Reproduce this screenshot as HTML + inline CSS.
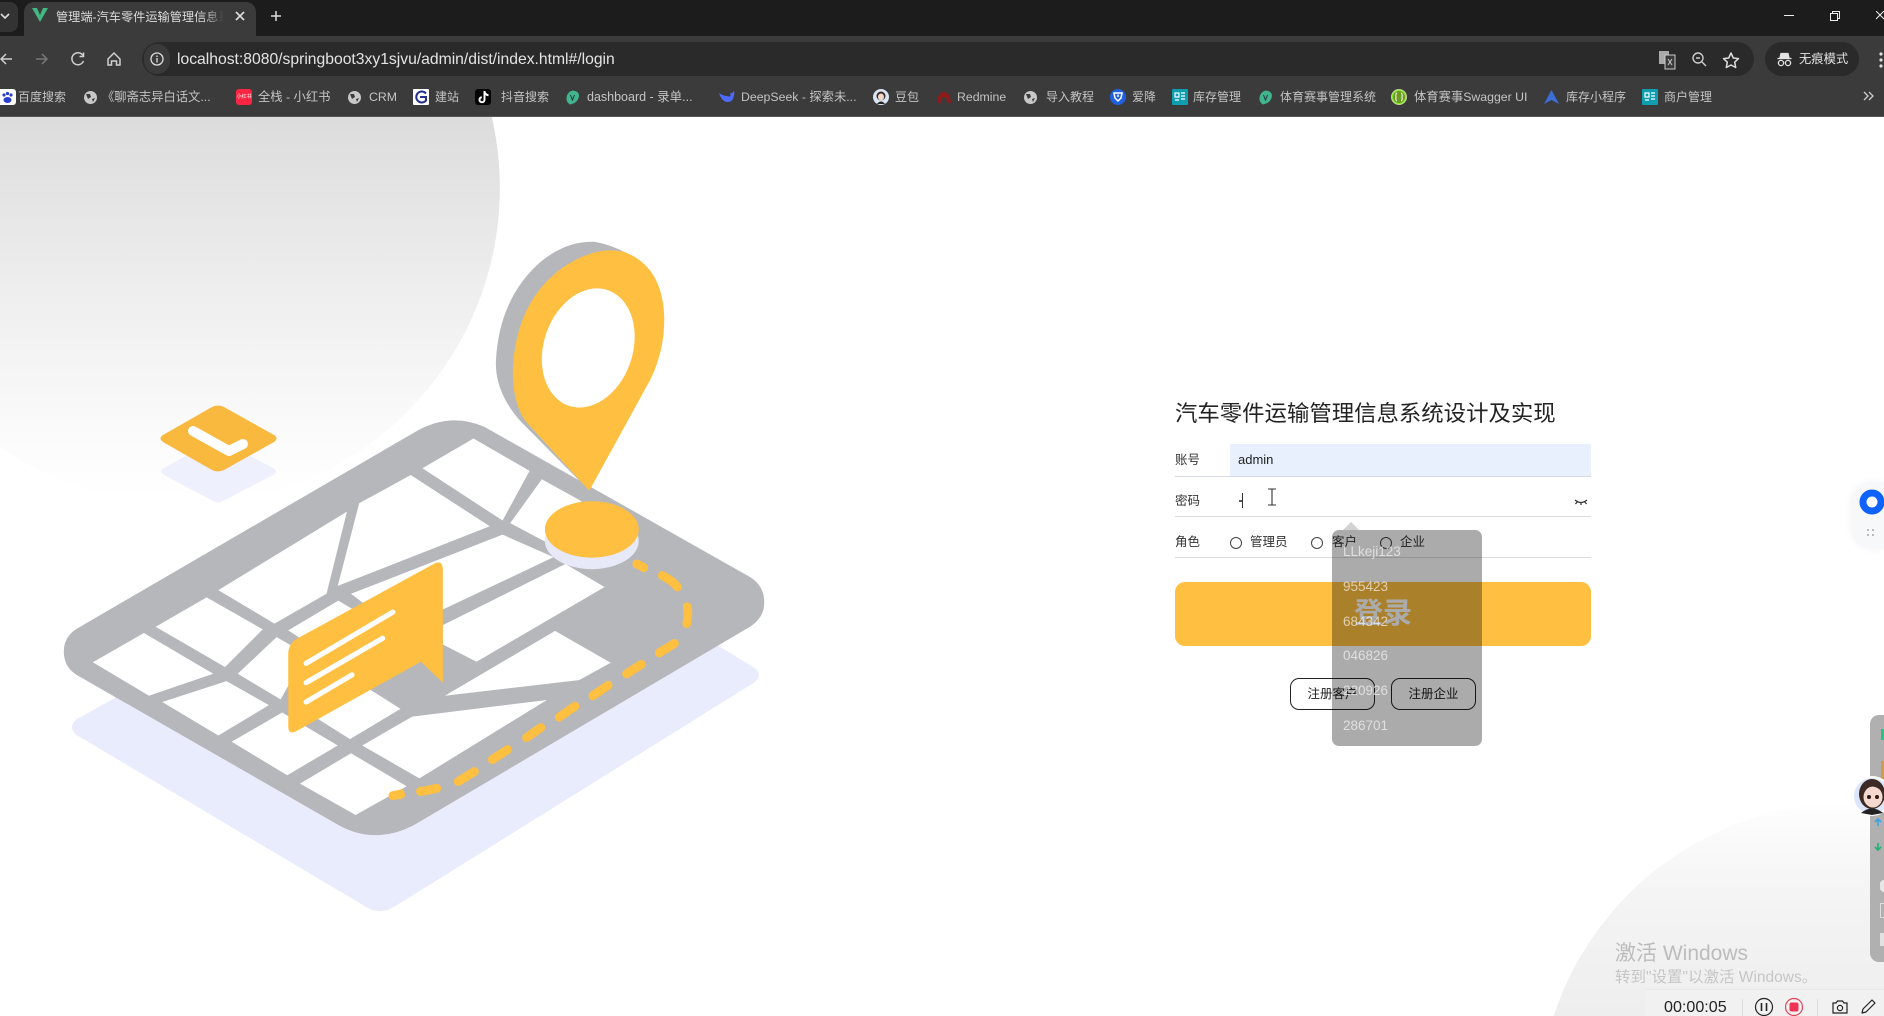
<!DOCTYPE html>
<html lang="zh-CN">
<head>
<meta charset="utf-8">
<title>管理端-汽车零件运输管理信息系统设计及实现</title>
<style>
html,body{margin:0;padding:0;background:#fff}
html{overflow:hidden;width:1884px;height:1016px}
body{width:1884px;height:1016px;position:relative;overflow:hidden;font-family:"Liberation Sans","Noto Sans CJK SC",sans-serif;color:#222}
.a{position:absolute;white-space:nowrap}
svg{position:absolute;overflow:hidden}
.bm{position:absolute;top:89px;height:17px;line-height:17px;font-size:12.3px;color:#c4c4c4;white-space:nowrap}
.z{font-size:12px}
.ic{position:absolute;top:89px;width:16px;height:16px;border-radius:3px}
.lbl{position:absolute;font-size:12.5px;line-height:16px;color:#333;white-space:nowrap}
.ln{position:absolute;left:1175px;width:416px;height:1px;background:#dcdcdc}
.rd{position:absolute;width:10px;height:10px;border:1px solid #444;border-radius:50%;background:transparent}
.it{position:absolute;left:1343px;font-size:13.5px;line-height:18px;color:rgba(255,255,255,.62);white-space:nowrap}
.rg{position:absolute;top:678px;width:83px;height:30px;border:1px solid #222;border-radius:9px;text-align:center;line-height:30px;font-size:12.5px;color:#222}
</style>
</head>
<body>
<!-- page background art -->
<svg width="1884" height="1016" style="left:0;top:0">
<defs>
<linearGradient id="g1" gradientUnits="userSpaceOnUse" x1="0" y1="117" x2="0" y2="495"><stop offset="0" stop-color="#dcdcdc"/><stop offset=".4" stop-color="#ececec"/><stop offset=".81" stop-color="#fafafa"/><stop offset="1" stop-color="#ffffff"/></linearGradient>
<linearGradient id="g2" gradientUnits="userSpaceOnUse" x1="0" y1="795" x2="0" y2="1016"><stop offset="0" stop-color="#ffffff"/><stop offset=".45" stop-color="#f4f4f4"/><stop offset="1" stop-color="#eeeeee"/></linearGradient>
</defs>
<path d="M0 0 H438.2 A317 317 0 0 1 0 446.8 Z" fill="url(#g1)"/>
<path d="M1553.6 1016 A310 310 0 0 1 1884 805.1 V1016 Z" fill="url(#g2)"/>
<!-- tag -->
<path d="M164 468 L213 441 Q218 438 223 441 L273 468 Q279 471 273 475 L223 501 Q218 504 213 501 L164 475 Q158 471 164 468Z" fill="#eef0fd"/>
<path d="M163 435 L212 407 Q218 404 224 407 L274 435 Q279 438 274 442 L224 470 Q218 473 212 470 L163 442 Q158 438 163 435Z" fill="#f9b93f"/>
<path d="M193 431 L229 451 L243 444" fill="none" stroke="#fff" stroke-width="10" stroke-linecap="round" stroke-linejoin="round"/>
<g transform="translate(0,110) scale(.5102,.523)">
<!-- lavender plate -->
<path d="M150 1165 L400 1030 L1300 960 L1478 1066 Q1497 1080 1478 1095 L772 1524 Q745 1540 718 1524 L150 1195 Q132 1180 150 1165Z" fill="#e9ecfc"/>
<!-- map -->
<path d="M150 992 L820 612 Q885 578 950 606 L1470 893 Q1498 910 1498 942 Q1498 970 1470 988 L810 1368 Q735 1405 665 1368 L150 1080 Q125 1065 125 1035 Q125 1008 150 992Z" fill="#b6b7bb"/>
<g fill="#fff">
<polygon points="928,628 1038,690 985,785 828,685"/>
<polygon points="805,698 960,796 662,910 704,752"/>
<polygon points="680,768 640,925 538,982 428,918"/>
<polygon points="405,932 515,993 441,1065 305,988"/>
<polygon points="282,1000 418,1078 292,1120 182,1056"/>
<polygon points="444,1092 527,1138 428,1196 318,1132"/>
<polygon points="542,1008 600,1040 550,1127 466,1078"/>
<polygon points="565,995 663,938 715,968 612,1025"/>
<polygon points="688,925 985,812 1085,855 868,955 800,960 715,945"/>
<polygon points="868,985 1108,868 1185,912 934,1055 868,1022"/>
<polygon points="1062,706 1140,748 1085,775 1068,825 1000,790"/>
<polygon points="1088,996 1197,1057 1135,1090 872,1120"/>
<polygon points="1072,1128 822,1278 710,1215 808,1160"/>
<polygon points="720,1105 785,1145 686,1203 600,1150"/>
<polygon points="454,1208 553,1152 662,1215 563,1272"/>
<polygon points="688,1230 797,1293 697,1348 588,1288"/>
</g>
<polygon points="760,1315 790,1298 795,1312 785,1318" fill="#ffbf40"/>
<!-- route dashes -->
<g fill="none" stroke="#ffbf40" stroke-width="17" stroke-linecap="round">
<path d="M1248 868 L1262 875"/>
<path d="M1298 890 Q1318 900 1328 912"/>
<path d="M1347 950 Q1350 965 1346 982"/>
<path d="M1322 1020 L1292 1038"/>
<path d="M1257 1060 L1228 1078"/>
<path d="M1192 1100 L1162 1120"/>
<path d="M1127 1140 L1096 1161"/>
<path d="M1060 1181 L1032 1200"/>
<path d="M995 1223 L965 1242"/>
<path d="M930 1265 L898 1284"/>
<path d="M856 1297 Q840 1301 824 1303"/>
<path d="M785 1308 L770 1311"/>
</g>
<!-- pin -->
<path d="M1155 728 L1020 595 Q970 540 972 480 Q978 360 1060 290 Q1110 250 1165 252 Q1200 258 1228 274 L1200 400 Z" fill="#b6b7bb"/>
<path d="M1155 728 L1030 595 Q1005 560 1005 500 Q1010 365 1105 300 Q1170 258 1225 272 Q1300 300 1302 400 Q1302 460 1275 515 Z" fill="#ffbf40"/>
<ellipse cx="1153" cy="455" rx="87" ry="117" transform="rotate(20 1153 455)" fill="#fff"/>
<!-- disc -->
<ellipse cx="1160" cy="824" rx="92" ry="54" fill="#e7e9f8"/>
<ellipse cx="1160" cy="802" rx="92" ry="54" fill="#ffbf40"/>
<!-- message card -->
<path d="M565 1040 Q565 1022 580 1012 L850 868 Q868 858 868 880 L868 1095 L825 1055 L580 1188 Q565 1195 565 1178Z" fill="#ffbf40"/>
<g fill="none" stroke="#fff" stroke-width="10" stroke-linecap="round">
<path d="M600 1058 L770 960"/>
<path d="M600 1095 L750 1010"/>
<path d="M600 1132 L690 1080"/>
</g>
</g>
</svg>

<!-- browser chrome -->
<div class="a" style="left:0;top:0;width:1884px;height:36px;background:#1c1c1c"></div>
<div class="a" style="left:0;top:36px;width:1884px;height:80px;background:#3b3b3b"></div>
<div class="a" style="left:0;top:2px;width:18px;height:30px;background:#333;border-radius:0 8px 8px 0"></div>
<svg style="left:0;top:0" width="20" height="36"><path d="M1 14 L5 18 L9 14" fill="none" stroke="#ddd" stroke-width="1.6"/></svg>
<div class="a" style="left:24px;top:2px;width:232px;height:34px;background:#3b3b3b;border-radius:10px 10px 0 0"></div>
<svg style="left:32px;top:7px" width="16" height="15"><path d="M0 1 L5 1 L8 8 L11 1 L16 1 L8 15Z" fill="#42b883"/></svg>
<div class="a" style="left:56px;top:7px;width:168px;height:20px;overflow:hidden;font-size:12.2px;line-height:20px;color:#dcdcdc;-webkit-mask-image:linear-gradient(90deg,#000 88%,transparent);mask-image:linear-gradient(90deg,#000 88%,transparent)">管理端-汽车零件运输管理信息系统设计及实现</div>
<svg style="left:234px;top:10px" width="12" height="12"><path d="M2 2 L10 10 M10 2 L2 10" stroke="#ddd" stroke-width="1.6"/></svg>
<svg style="left:270px;top:10px" width="12" height="12"><path d="M6 1 V11 M1 6 H11" stroke="#ddd" stroke-width="1.5"/></svg>
<svg style="left:1784px;top:14px" width="12" height="4"><path d="M0 1.5 H10" stroke="#eee" stroke-width="1"/></svg>
<svg style="left:1829px;top:10px" width="12" height="12"><path d="M1.5 3.5 H8.5 V10.5 H1.5Z M3.5 3.5 V1.5 H10.5 V8.5 H8.5" fill="none" stroke="#eee" stroke-width="1"/></svg>
<svg style="left:1876px;top:11px" width="8" height="10"><path d="M0 0 L8 8 M8 0 L0 8" stroke="#eee" stroke-width="1"/></svg>
<!-- nav icons -->
<svg style="left:0;top:50px" width="130" height="18" fill="none" stroke="#d0d0d0" stroke-width="1.5">
<path d="M12 9 H1 M6 4 L1 9 L6 14"/>
<path d="M36 9 H47 M42 4 L47 9 L42 14" stroke="#777"/>
<path d="M83 5.5 A6 6 0 1 0 83.5 11 M83.5 2.5 V6.5 H79.5"/>
<path d="M108 9 L114 3 L120 9 V15 H116.5 V11 H111.5 V15 H108Z"/>
</svg>
<!-- omnibox -->
<div class="a" style="left:142px;top:42px;width:1612px;height:34px;border-radius:17px;background:#2a2a2a"></div>
<div class="a" style="left:144px;top:44px;width:26px;height:30px;border-radius:15px;background:#3a3a3a"></div>
<svg style="left:149px;top:51px" width="16" height="16" fill="none" stroke="#ddd" stroke-width="1.3"><circle cx="8" cy="8" r="6"/><path d="M8 7 V11.5 M8 4.5 V6" /></svg>
<div class="a" style="left:177px;top:48px;height:22px;line-height:24px;font-size:15.7px;color:#e4e4e4">localhost:8080/springboot3xy1sjvu/admin/dist/index.html#/login</div>
<!-- right omnibox icons -->
<svg style="left:1658px;top:50px" width="90" height="20" fill="none">
<rect x="1" y="1" width="10" height="13" fill="#aaa"/><rect x="7" y="5" width="10" height="14" fill="#3a3a3a" stroke="#ccc" stroke-width="1"/><path d="M10 9 L14 15 M14 9 L10 15" stroke="#ccc"/>
<circle cx="40" cy="8" r="5" stroke="#ccc" stroke-width="1.4"/><path d="M44 12 L48 16 M38 8 H42" stroke="#ccc" stroke-width="1.4"/>
<path d="M73 3 L75.3 8 L80.5 8.6 L76.7 12.2 L77.7 17.5 L73 15 L68.3 17.5 L69.3 12.2 L65.5 8.6 L70.7 8Z" stroke="#ddd" stroke-width="1.5" stroke-linejoin="round"/>
</svg>
<div class="a" style="left:1765px;top:42px;width:94px;height:34px;border-radius:17px;background:#2a2a2a"></div>
<svg style="left:1777px;top:52px" width="16" height="15" fill="none" stroke="#e4e4e4" stroke-width="1.3"><path d="M4 1.5 H11 L12 6 H3Z" fill="#e4e4e4"/><path d="M0.5 6.5 H14.5"/><circle cx="4" cy="11" r="2.6"/><circle cx="11" cy="11" r="2.6"/></svg>
<div class="a" style="left:1799px;top:50px;line-height:18px;font-size:12.3px;color:#e4e4e4">无痕模式</div>
<svg style="left:1878px;top:51px" width="6" height="18"><circle cx="3" cy="3" r="1.6" fill="#ddd"/><circle cx="3" cy="9" r="1.6" fill="#ddd"/><circle cx="3" cy="15" r="1.6" fill="#ddd"/></svg>
<!-- bookmarks -->
<div class="ic" style="left:0;background:#fff;border-radius:0 3px 3px 0"></div>
<svg style="left:1px;top:91px" width="13" height="13" fill="#2a3fd0"><circle cx="3" cy="4" r="1.6"/><circle cx="6.5" cy="2.5" r="1.6"/><circle cx="10" cy="4" r="1.6"/><ellipse cx="6.5" cy="9" rx="4" ry="3"/></svg>
<div class="bm z" style="left:18px">百度搜索</div>
<svg style="left:83px;top:90px" width="15" height="15"><circle cx="7.5" cy="7.5" r="6.5" fill="#c8c8c8"/><path d="M3 4 L7 4 L8 7 L5 9Z M9 9 L12 8 L10 12Z" fill="#3b3b3b"/></svg>
<div class="bm" style="left:102px">《聊斋志异白话文...</div>
<div class="ic" style="left:236px;background:#ff2442"></div>
<div class="a" style="left:236px;top:93px;width:16px;text-align:center;font-size:5px;line-height:8px;color:#fff">小红书</div>
<div class="bm" style="left:258px">全栈 - 小红书</div>
<svg style="left:347px;top:90px" width="15" height="15"><circle cx="7.5" cy="7.5" r="6.5" fill="#c8c8c8"/><path d="M3 4 L7 4 L8 7 L5 9Z M9 9 L12 8 L10 12Z" fill="#3b3b3b"/></svg>
<div class="bm" style="left:369px">CRM</div>
<div class="ic" style="left:413px;background:#fff;border-radius:1px"></div>
<svg style="left:414px;top:90px" width="14" height="14" fill="none" stroke="#23318c" stroke-width="2"><path d="M12 3.5 A5.5 5.5 0 1 0 12 10.5 V7 H6"/></svg>
<div class="bm z" style="left:435px">建站</div>
<div class="ic" style="left:475px;background:#050505"></div>
<svg style="left:478px;top:91px" width="11" height="13" fill="none" stroke="#fff" stroke-width="2"><path d="M6.5 0 V8.5 A2.5 2.5 0 1 1 3.8 6.2 M6.5 1 Q7.5 4 10.5 4.2"/></svg>
<div class="bm z" style="left:501px">抖音搜索</div>
<svg style="left:565px;top:90px" width="15" height="15"><path d="M7.5 0.5 Q14 1 14 6 Q13 13 5 14.5 Q1 12 1.5 8 Q2 2 7.5 0.5Z" fill="#41b58c"/><path d="M5.5 5 L7.5 10 L9.5 5" stroke="#234" fill="none"/></svg>
<div class="bm" style="left:587px;font-size:12.5px">dashboard - 录单...</div>
<svg style="left:719px;top:90px" width="16" height="15"><path d="M0 3 Q3 12 9 12 Q14 12 15 5 Q16 2 14 1 Q14 4 11 3 Q13 8 8 6 Q4 6 0 3Z" fill="#4d6bfe"/></svg>
<div class="bm" style="left:741px">DeepSeek - 探索未...</div>
<svg style="left:873px;top:89px" width="16" height="16"><circle cx="8" cy="8" r="8" fill="#d9e6f5"/><circle cx="8" cy="7" r="4.5" fill="#3d2a24"/><ellipse cx="8" cy="8" rx="3" ry="3.5" fill="#f3d8cc"/><path d="M4 15 Q8 10 12 15Z" fill="#222"/></svg>
<div class="bm z" style="left:895px">豆包</div>
<svg style="left:936px;top:90px" width="16" height="14"><path d="M1 13 Q2 2 8 2 Q14 2 15 13 L11 13 Q11 7 8 7 Q5 7 5 13Z" fill="#8e1b1b"/></svg>
<div class="bm" style="left:957px">Redmine</div>
<svg style="left:1023px;top:90px" width="15" height="15"><circle cx="7.5" cy="7.5" r="6.5" fill="#c8c8c8"/><path d="M3 4 L7 4 L8 7 L5 9Z M9 9 L12 8 L10 12Z" fill="#3b3b3b"/></svg>
<div class="bm z" style="left:1046px">导入教程</div>
<svg style="left:1110px;top:89px" width="16" height="16"><circle cx="8" cy="8" r="8" fill="#1f5fe0"/><path d="M4 4 L12 4 L11 9 L8 12 L5 9Z" fill="none" stroke="#fff" stroke-width="1.5"/><path d="M8 5.5 V8" stroke="#fff" stroke-width="1.5"/></svg>
<div class="bm z" style="left:1132px">爱降</div>
<div class="ic" style="left:1172px;background:#0e9eb0;border-radius:1px"></div>
<svg style="left:1174px;top:92px" width="12" height="10" fill="none" stroke="#fff" stroke-width="1.2"><path d="M1 1 H5 V5 H1Z M7 1 H11 M7 4 H11 M7 7 H11 M1 8 H5"/></svg>
<div class="bm z" style="left:1193px">库存管理</div>
<svg style="left:1258px;top:90px" width="15" height="15"><path d="M7.5 0.5 Q14 1 14 6 Q13 13 5 14.5 Q1 12 1.5 8 Q2 2 7.5 0.5Z" fill="#41b58c"/><path d="M5.5 5 L7.5 10 L9.5 5" stroke="#234" fill="none"/></svg>
<div class="bm z" style="left:1280px">体育赛事管理系统</div>
<svg style="left:1391px;top:89px" width="16" height="16"><circle cx="8" cy="8" r="7.5" fill="#85ea2d" stroke="#c0d890"/><circle cx="8" cy="8" r="6" fill="#6d9b1f"/><path d="M6 4 Q4.5 4 5 8 Q4.5 12 6 12 M10 4 Q11.5 4 11 8 Q11.5 12 10 12" stroke="#fff" fill="none"/></svg>
<div class="bm" style="left:1414px">体育赛事Swagger UI</div>
<svg style="left:1544px;top:90px" width="15" height="14"><path d="M7.5 0 L15 14 L7.5 10 L0 14Z" fill="#3b6fd8"/></svg>
<div class="bm z" style="left:1566px">库存小程序</div>
<div class="ic" style="left:1642px;background:#0e9eb0;border-radius:1px"></div>
<svg style="left:1644px;top:92px" width="12" height="10" fill="none" stroke="#fff" stroke-width="1.2"><path d="M1 1 H5 V5 H1Z M7 1 H11 M7 4 H11 M7 7 H11 M1 8 H5"/></svg>
<div class="bm z" style="left:1664px">商户管理</div>
<svg style="left:1863px;top:91px" width="12" height="10" fill="none" stroke="#ccc" stroke-width="1.3"><path d="M1 1 L5 5 L1 9 M6 1 L10 5 L6 9"/></svg>
<div class="a" style="left:0;top:116px;width:1884px;height:1px;background:#555"></div>

<!-- login form -->
<div class="a" style="left:1175px;top:400px;font-size:22.4px;line-height:28px;color:#222">汽车零件运输管理信息系统设计及实现</div>
<div class="lbl" style="left:1175px;top:452px">账号</div>
<div class="a" style="left:1230px;top:444px;width:361px;height:32px;background:#e8f0fe"></div>
<div class="a" style="left:1238px;top:452px;font-size:13px;line-height:16px;color:#222">admin</div>
<div class="ln" style="top:476px;background:#d6dbe2"></div>
<div class="lbl" style="left:1175px;top:493px">密码</div>
<div class="a" style="left:1241.5px;top:493px;width:1px;height:15px;background:#333"></div>
<div class="a" style="left:1239px;top:500px;width:3px;height:1.5px;background:#555"></div>
<svg style="left:1265px;top:488px" width="14" height="18" fill="none" stroke="#333" stroke-width="1.1"><path d="M3 1 H11 M7 1 V17 M3 17 H11"/></svg>
<svg style="left:1574px;top:498px" width="14" height="8" fill="none" stroke="#333" stroke-width="1.2"><path d="M1 2 Q7 7 13 2 M3 4 L1.5 6 M7 5 V7 M11 4 L12.5 6"/></svg>
<div class="ln" style="top:516px"></div>
<div class="lbl" style="left:1175px;top:534px">角色</div>
<div class="rd" style="left:1230px;top:537px"></div>
<div class="lbl" style="left:1250px;top:534px">管理员</div>
<div class="rd" style="left:1311px;top:537px"></div>
<div class="lbl" style="left:1332px;top:534px">客户</div>
<div class="rd" style="left:1380px;top:537px"></div>
<div class="lbl" style="left:1400px;top:534px">企业</div>
<div class="ln" style="top:557px"></div>
<div class="a" style="left:1175px;top:582px;width:416px;height:64px;background:#ffbf40;border-radius:10px"></div>
<div class="a" style="left:1175px;top:595px;width:416px;text-align:center;font-size:29px;line-height:38px;font-weight:700;color:#fff">登录</div>
<div class="rg" style="left:1290px">注册客户</div>
<div class="rg" style="left:1391px">注册企业</div>

<!-- password suggestion overlay -->
<div class="a" style="left:1332px;top:530px;width:150px;height:216px;background:rgba(0,0,0,.33);border-radius:7px"></div>
<svg style="left:1343px;top:522px" width="16" height="8"><path d="M0 8 L8 0 L16 8Z" fill="#d2d2d2"/></svg>
<div class="it" style="top:543px">LLkeji123</div>
<div class="it" style="top:578px">955423</div>
<div class="it" style="top:613px">684342</div>
<div class="it" style="top:647px">046826</div>
<div class="it" style="top:682px">220926</div>
<div class="it" style="top:717px">286701</div>

<!-- floating blue widget -->
<div class="a" style="left:1851px;top:482px;width:33px;height:67px;background:#f7f8fa;border-radius:22px 0 0 22px;box-shadow:0 0 8px rgba(0,0,0,.05)"></div>
<svg style="left:1858px;top:488px" width="26" height="50"><circle cx="14" cy="14" r="9" fill="#fff" stroke="#0f62fe" stroke-width="7"/><rect x="9" y="41" width="2" height="2" fill="#bbb"/><rect x="14" y="41" width="2" height="2" fill="#bbb"/><rect x="9" y="46" width="2" height="2" fill="#bbb"/><rect x="14" y="46" width="2" height="2" fill="#bbb"/></svg>

<!-- right dock -->
<div class="a" style="left:1870px;top:715px;width:14px;height:247px;border-radius:9px 0 0 9px;background:#b0b0b0"></div>
<div class="a" style="left:1881px;top:729px;width:3px;height:11px;background:#30c080"></div>
<div class="a" style="left:1881px;top:761px;width:3px;height:18px;background:#d09a50"></div>
<svg style="left:1852px;top:776px" width="32" height="78">
<circle cx="20" cy="20" r="20" fill="#fff"/><circle cx="20" cy="20" r="18" fill="#dbe6fb"/>
<ellipse cx="20" cy="18" rx="13" ry="15" fill="#3d2a24"/><ellipse cx="21" cy="21" rx="9.5" ry="10.5" fill="#f5d9cf"/>
<path d="M12 13 Q20 7 30 15 Q24 8 16 9Z" fill="#3d2a24"/>
<circle cx="17" cy="21" r="2" fill="#2a1a16"/><circle cx="25" cy="21" r="2" fill="#2a1a16"/>
<path d="M9 37 Q20 28 31 37 L20 39Z" fill="#222"/>
<path d="M23 46 L26 43 L29 46 M26 43 V50" stroke="#3ba3e8" stroke-width="1.6" fill="none"/>
<path d="M23 71 L26 74 L29 71 M26 74 V67" stroke="#20b070" stroke-width="1.6" fill="none"/>
</svg>
<div class="a" style="left:1880px;top:880px;width:4px;height:12px;background:#e6e6e6;border-radius:4px 0 0 4px"></div>
<div class="a" style="left:1880px;top:903px;width:3px;height:13px;border:1px solid #ddd;border-right:0"></div>
<div class="a" style="left:1880px;top:933px;width:4px;height:13px;background:#e2e2e2"></div>

<!-- windows watermark -->
<div class="a" style="left:1615px;top:942px;font-size:21px;line-height:24px;color:#bcbcbc">激活 Windows</div>
<div class="a" style="left:1615px;top:969px;font-size:15.5px;line-height:18px;color:#c6c6c6">转到"设置"以激活 Windows。</div>

<!-- recorder bar -->
<div class="a" style="left:1645px;top:989px;width:239px;height:27px;background:#f1f1f1;border-top:1px solid #e8e8e8;box-sizing:border-box"></div>
<div class="a" style="left:1664px;top:998px;font-size:16.1px;line-height:18px;color:#222">00:00:05</div>
<div class="a" style="left:1742px;top:999px;width:1px;height:17px;background:#ddd"></div>
<div class="a" style="left:1817px;top:999px;width:1px;height:17px;background:#ddd"></div>
<svg style="left:1750px;top:992px" width="130" height="24" fill="none">
<circle cx="14" cy="15" r="8.5" stroke="#222" stroke-width="1.2"/><path d="M11.5 11 V19 M16.5 11 V19" stroke="#222" stroke-width="1.6"/>
<circle cx="44" cy="15" r="8.5" stroke="#e0445a" stroke-width="1.2"/><rect x="39.5" y="10.5" width="9" height="9" rx="2" fill="#ee3355"/>
<path d="M83 11 H86 L87.5 9 H92.5 L94 11 H97 V21 H83Z" stroke="#222" stroke-width="1.2"/><circle cx="90" cy="16" r="2.6" stroke="#222" stroke-width="1.2"/>
<path d="M112 21 L113 17 L122 8 L125 11 L116 20Z" stroke="#222" stroke-width="1.2" stroke-linejoin="round"/>
</svg>
</body>
</html>
